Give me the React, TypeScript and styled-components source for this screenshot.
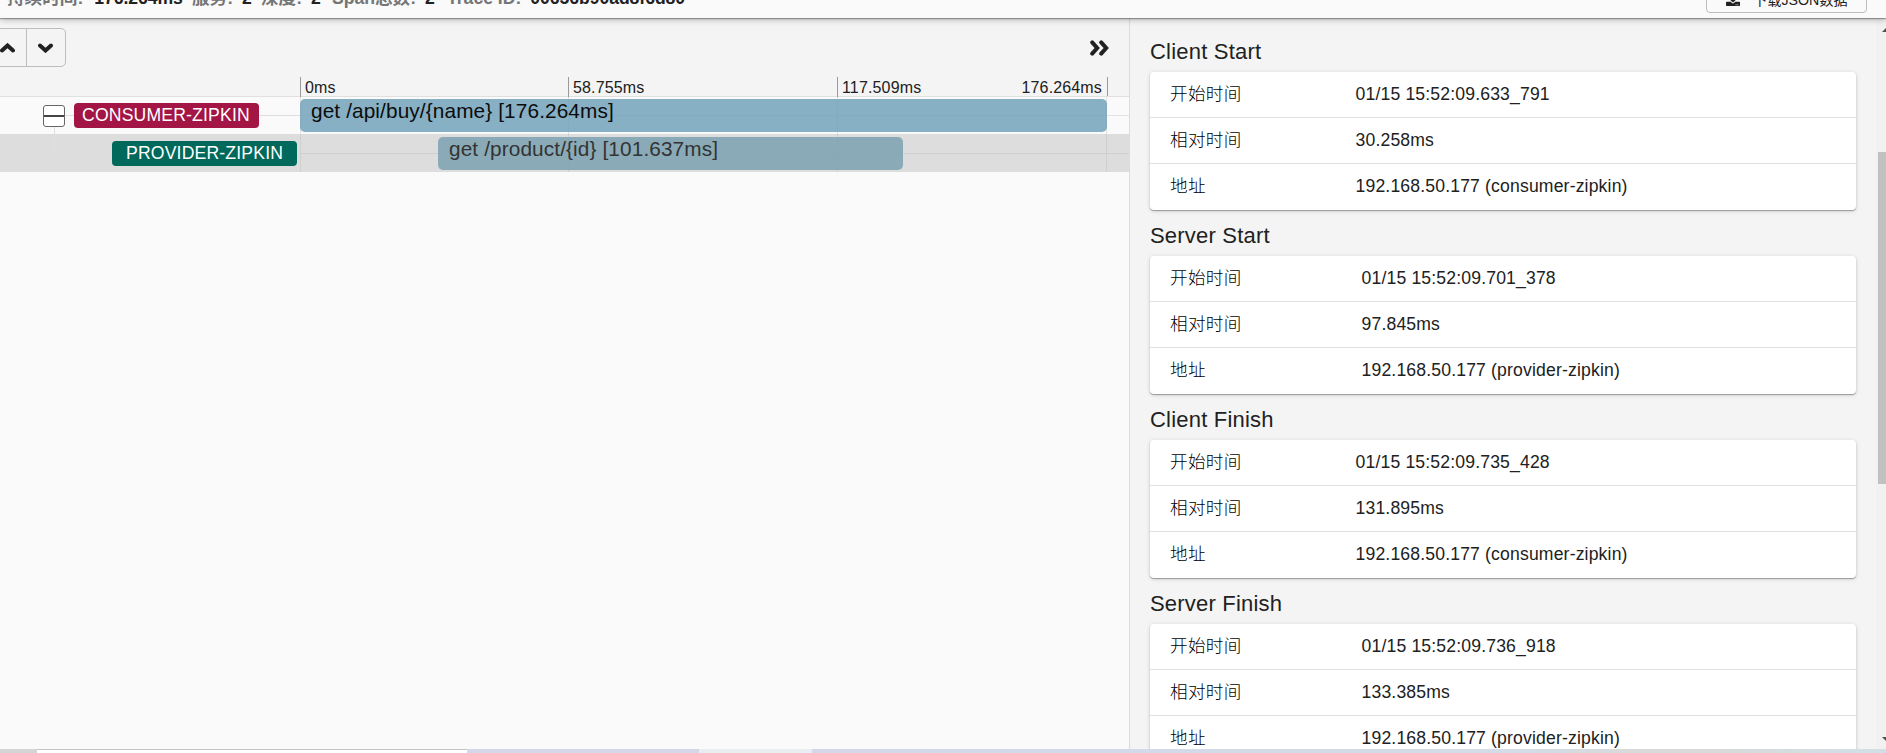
import React from 'react';
import styled, { createGlobalStyle } from 'styled-components';
import { FaDownload } from 'react-icons/fa';

const GlobalStyle = createGlobalStyle`
  * { box-sizing: border-box; }
  body {
    margin: 0;
    overflow: hidden;
    background: #fafafa;
    color: #212121;
    font-family: "Liberation Sans", Arial, "Noto Sans CJK SC", sans-serif;
  }
`;

const Page = styled.div`
  height: 753px;
  display: flex;
  flex-direction: column;
  overflow: hidden;
`;

const Header = styled.header`
  flex: 0 0 18px;
  height: 18px;
  min-height: 0;
  position: relative;
  z-index: 2;
  display: flex;
  justify-content: space-between;
  align-items: flex-end;
  background: #fafafa;
  box-shadow: 0 1px 1px rgba(0, 0, 0, 0.3), 0 1px 7px rgba(0, 0, 0, 0.32);
`;

const Summary = styled.div`
  display: flex;
  align-items: baseline;
  height: 33px;
  padding: 0 0 0 7px;
  font-size: 17.6px;
  line-height: 26px;
  font-weight: 700;
  white-space: pre;
`;

const SummaryItem = styled.div<{ $width: number; $gap?: number }>`
  width: ${(p) => p.$width}px;
  display: flex;
  gap: ${(p) => p.$gap ?? 9}px;
  color: #212121;
`;

const SummaryLabel = styled.span`
  color: #757575;
`;

const SummaryValue = styled.span`
  letter-spacing: -0.05px;
`;

const DownloadButton = styled.button`
  height: 28px;
  width: 161px;
  margin: 0 19px 5px 0;
  padding: 0 0 0 19px;
  display: flex;
  align-items: center;
  gap: 13px;
  border: 1px solid #bdbdbd;
  border-radius: 4px;
  background: none;
  color: #212121;
  font-family: inherit;
  font-size: 14.2px;
  white-space: nowrap;
`;

const Content = styled.main`
  flex: 1;
  min-height: 0;
  display: flex;
`;

const Timeline = styled.section`
  flex: 0 0 1129px;
  border-right: 1px solid #dcdcdc;
  background: #fafafa;
`;

const TimelineHead = styled.div`
  height: 79px;
  background: #f4f4f4;
  border-bottom: 1px solid #e0e0e0;
`;

const Toolbar = styled.div`
  height: 59px;
  padding: 10px 20px 10px 0;
  display: flex;
  justify-content: space-between;
  align-items: center;
`;

const StepButtons = styled.div`
  height: 39px;
  width: 77px;
  margin-left: -11px;
  display: flex;
  border: 1px solid #bdbdbd;
  border-radius: 5px;
`;

const StepButton = styled.button<{ $width: number }>`
  width: ${(p) => p.$width}px;
  padding: 0 1px 0 0;
  display: flex;
  align-items: center;
  justify-content: center;
  border: 0;
  background: none;
  color: #212121;
  & + & { border-left: 1px solid #bdbdbd; }
`;

const Glyph = styled.svg`
  display: block;
  fill: none;
  stroke: #212121;
  stroke-width: 4;
  stroke-linecap: round;
`;

const Ruler = styled.div`
  height: 19px;
  margin: 0 21px 0 300px;
  display: grid;
  grid-template-columns: 268px 269px 270px;
  border-right: 1px solid #999;
`;

const Tick = styled.div`
  display: flex;
  justify-content: space-between;
  padding: 0 5px 0 4px;
  border-left: 1px solid #999;
  font-size: 16px;
  line-height: 21px;
  letter-spacing: 0.15px;
`;

const SpanRow = styled.div<{ $selected?: boolean }>`
  height: ${(p) => (p.$selected ? 38 : 37)}px;
  display: flex;
  background: ${(p) => (p.$selected ? '#dddddd' : '#fafafa')};
  color: ${(p) => (p.$selected ? '#333' : '#0c0c0c')};
`;

const ServiceCell = styled.div<{ $indent: number }>`
  flex: 0 0 300px;
  padding-left: ${(p) => p.$indent}px;
  display: flex;
  align-items: center;
`;

const Toggle = styled.div`
  width: 22px;
  height: 22px;
  position: relative;
  border: 1px solid #666;
  border-radius: 3px;
  background: linear-gradient(#444, #444) 0 9px / 100% 2px no-repeat #fff;
  &::after {
    content: '';
    position: absolute;
    left: 10px;
    top: 21px;
    width: 1px;
    height: 26px;
    background: #e0e0e0;
  }
`;

const Badge = styled.span<{ $color: string; $left: number }>`
  flex: 0 0 185px;
  height: 25px;
  padding-left: ${(p) => p.$left}px;
  border-radius: 4px;
  background: ${(p) => p.$color};
  color: #fff;
  font-size: 17.6px;
  line-height: 25px;
  letter-spacing: 0.18px;
`;

const Connector = styled.span<{ $width?: number }>`
  flex: ${(p) => (p.$width ? `0 0 ${p.$width}px` : '1')};
  height: 1px;
  margin-bottom: 1px;
  background: #dedede;
`;

const Track = styled.div<{ $line: string; $at: number }>`
  flex: 1;
  height: 100%;
  padding-top: ${(p) => p.$at - 16}px;
  background:
    linear-gradient(${(p) => p.$line}, ${(p) => p.$line}) 0 ${(p) => p.$at}px / 100% 1px no-repeat,
    linear-gradient(${(p) => p.$line}, ${(p) => p.$line}) 0 0 / 1px 100% no-repeat,
    linear-gradient(${(p) => p.$line}, ${(p) => p.$line}) 268px 0 / 1px 100% no-repeat,
    linear-gradient(${(p) => p.$line}, ${(p) => p.$line}) 537px 0 / 1px 100% no-repeat,
    linear-gradient(${(p) => p.$line}, ${(p) => p.$line}) 806px 0 / 1px 100% no-repeat;
`;

const Bar = styled.div<{ $selected?: boolean }>`
  height: 33px;
  padding-left: 11px;
  border-radius: 5px;
  background: ${(p) => (p.$selected ? 'rgba(118, 158, 174, 0.8)' : 'rgba(115, 163, 187, 0.86)')};
  font-size: 20.8px;
  line-height: 23px;
  letter-spacing: 0.11px;
  white-space: nowrap;
`;

const Details = styled.aside`
  flex: 1;
  min-width: 0;
  padding: 16px 20px 0 20px;
  overflow: hidden;
  background: #f4f4f4;
`;

const Annotation = styled.section`
  height: 184px;
`;

const AnnotationTitle = styled.h6`
  height: 38px;
  margin: 0;
  font-size: 22px;
  font-weight: 400;
  line-height: 35px;
  letter-spacing: 0.2px;
`;

const Card = styled.div`
  height: 138px;
  border-radius: 4px;
  background: #fff;
  box-shadow: 0 1px 1px rgba(0, 0, 0, 0.3), 0 1px 4px rgba(0, 0, 0, 0.16);
`;

const Field = styled.div<{ $offset: number }>`
  height: 46px;
  padding-left: 20px;
  display: grid;
  grid-template-columns: ${(p) => p.$offset}px 1fr;
  border-bottom: 1px solid #e0e0e0;
  font-size: 17.6px;
  line-height: 44px;
  letter-spacing: 0.16px;
  &:last-child { border-bottom: 0; }
`;

const FieldName = styled.span`
  color: #000;
  font-weight: 300;
  letter-spacing: 0.3px;
`;

const ScrollTrack = styled.div`
  flex: 0 0 10px;
  padding: 10px 0 8px 2px;
  display: flex;
  flex-direction: column;
  overflow: hidden;
  background: #f1f1f1;
`;

const ScrollThumb = styled.div`
  flex: 0 0 332px;
  margin: 120px 0 auto;
  background: #c1c1c1;
`;

const ScrollArrow = styled.svg`
  width: 8px;
  height: 4px;
  display: block;
`;

const BottomStrip = styled.footer`
  flex: 0 0 4px;
  display: flex;
`;

const StripPart = styled.div<{ $width?: number; $fill: string; $framed?: boolean }>`
  flex: ${(p) => (p.$width ? `0 0 ${p.$width}px` : '1')};
  background: ${(p) => p.$fill};
  border-top: ${(p) => (p.$framed ? '1px solid #c4c4c4' : '0')};
`;

const summary = [
  { label: '持续时间:', value: '176.264ms', width: 185, gap: 11 },
  { label: '服务:', value: '2', width: 69 },
  { label: '深度:', value: '2', width: 71 },
  { label: 'Span总数:', value: '2', width: 115 },
  { label: 'Trace ID:', value: '00656b90ad8f6d80', width: 260 },
];

const annotations = [
  { title: 'Client Start', time: '01/15 15:52:09.633_791', relative: '30.258ms', address: '192.168.50.177 (consumer-zipkin)', offset: 185.5 },
  { title: 'Server Start', time: '01/15 15:52:09.701_378', relative: '97.845ms', address: '192.168.50.177 (provider-zipkin)', offset: 191.5 },
  { title: 'Client Finish', time: '01/15 15:52:09.735_428', relative: '131.895ms', address: '192.168.50.177 (consumer-zipkin)', offset: 185.5 },
  { title: 'Server Finish', time: '01/15 15:52:09.736_918', relative: '133.385ms', address: '192.168.50.177 (provider-zipkin)', offset: 191.5 },
];

export default function App() {
  return (
    <>
      <GlobalStyle />
      <Page>
        <Header>
          <Summary>
            {summary.map((s) => (
              <SummaryItem key={s.label} $width={s.width} $gap={s.gap}>
                <SummaryLabel>{s.label}</SummaryLabel>
                <SummaryValue>{s.value}</SummaryValue>
              </SummaryItem>
            ))}
          </Summary>
          <DownloadButton>
            <FaDownload size={14} />
            下载JSON数据
          </DownloadButton>
        </Header>
        <Content>
          <Timeline>
            <TimelineHead>
              <Toolbar>
                <StepButtons>
                  <StepButton $width={36}>
                    <Glyph width="15" height="10"><path d="M2 7.5 7.5 2.5 13 7.5" /></Glyph>
                  </StepButton>
                  <StepButton $width={39}>
                    <Glyph width="15" height="10"><path d="M2 2.5 7.5 7.5 13 2.5" /></Glyph>
                  </StepButton>
                </StepButtons>
                <Glyph width="19" height="16"><path d="M2.2 2.4 7.2 8 2.2 13.6M11.2 2.4 16.2 8 11.2 13.6" /></Glyph>
              </Toolbar>
              <Ruler>
                <Tick>0ms</Tick>
                <Tick>58.755ms</Tick>
                <Tick><span>117.509ms</span><span>176.264ms</span></Tick>
              </Ruler>
            </TimelineHead>
            <SpanRow>
              <ServiceCell $indent={43}>
                <Toggle />
                <Connector $width={9} />
                <Badge $color="#a31545" $left={8}>CONSUMER-ZIPKIN</Badge>
                <Connector />
              </ServiceCell>
              <Track $line="#e2e2e2" $at={18}>
                <Bar style={{ width: 807 }}>get /api/buy/{'{name}'} [176.264ms]</Bar>
              </Track>
            </SpanRow>
            <SpanRow $selected>
              <ServiceCell $indent={112}>
                <Badge $color="#00695c" $left={14}>PROVIDER-ZIPKIN</Badge>
              </ServiceCell>
              <Track $line="#cfcfcf" $at={19}>
                <Bar $selected style={{ width: 465, marginLeft: 138 }}>get /product/{'{id}'} [101.637ms]</Bar>
              </Track>
            </SpanRow>
          </Timeline>
          <Details>
            {annotations.map((a) => (
              <Annotation key={a.title}>
                <AnnotationTitle>{a.title}</AnnotationTitle>
                <Card>
                  <Field $offset={a.offset}><FieldName>开始时间</FieldName><span>{a.time}</span></Field>
                  <Field $offset={a.offset}><FieldName>相对时间</FieldName><span>{a.relative}</span></Field>
                  <Field $offset={a.offset}><FieldName>地址</FieldName><span>{a.address}</span></Field>
                </Card>
              </Annotation>
            ))}
          </Details>
          <ScrollTrack>
            <ScrollArrow viewBox="0 0 8 4"><path d="M4 4 8 0V4Z" fill="#505050" /></ScrollArrow>
            <ScrollThumb />
            <ScrollArrow viewBox="0 0 8 4"><path d="M4 0H8V4Z" fill="#505050" /></ScrollArrow>
          </ScrollTrack>
        </Content>
        <BottomStrip>
          <StripPart $width={37} $fill="#d5d5d5" />
          <StripPart $width={430} $fill="#fff" $framed />
          <StripPart $width={232} $fill="#d3d7e8" />
          <StripPart $width={113} $fill="#e9eef2" />
          <StripPart $fill="linear-gradient(90deg, #d3d7e8, #d3dce8 65%, #d8dadb 75%, #d8dadb 85%, #d1e0e6)" />
        </BottomStrip>
      </Page>
    </>
  );
}
